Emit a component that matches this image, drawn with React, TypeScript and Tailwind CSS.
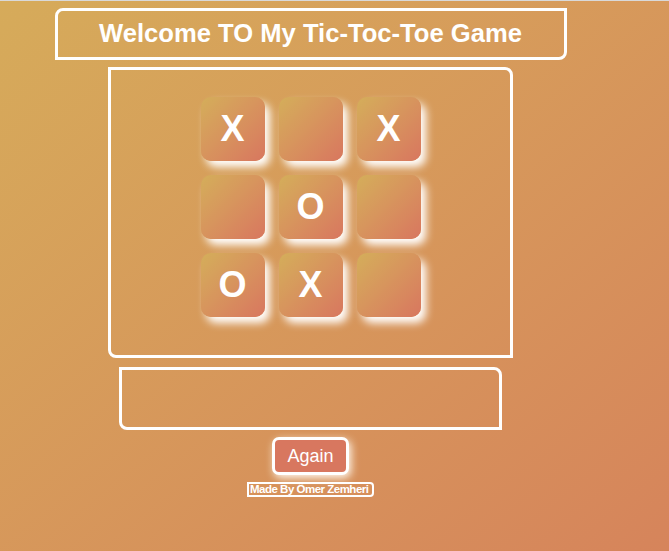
const cells = ["X", "", "X", "", "O", "", "O", "X", ""];

export default function App() {
  return (
    <div
      className="min-h-[551px] w-full bg-gradient-to-br from-[#d6ab5a] to-[#d6845b] border-t border-[#d9d9d9]"
      style={{ fontFamily: '"Liberation Sans", Arial, sans-serif' }}
    >
      <div className="w-[621px] flex flex-col items-center pt-[7px]">
        {/* タイトル */}
        <div className="w-[512px] h-[52px] border-[3px] border-white rounded-tl-[8px] rounded-br-[8px] flex items-center justify-center">
          <h1 className="text-white font-bold text-[25.6px] leading-none">
            Welcome TO My Tic-Toc-Toe Game
          </h1>
        </div>

        {/* 盤面 */}
        <div className="mt-[7px] w-[405px] h-[291px] border-[3px] border-white rounded-tr-[8px] rounded-bl-[8px] flex justify-center pt-[27px]">
          <div className="grid grid-cols-3 gap-[14px] h-fit">
            {cells.map((c, i) => (
              <div
                key={i}
                className="w-[64px] h-[64px] rounded-[10px] bg-gradient-to-br from-[#d4ae5a] to-[#d8765f] shadow-[5px_6px_9px_#ffffff] flex items-center justify-center text-white font-bold text-[36px] leading-none"
              >
                {c}
              </div>
            ))}
          </div>
        </div>

        {/* 結果 */}
        <div className="mt-[9px] w-[383px] h-[63px] border-[3px] border-white rounded-tr-[8px] rounded-bl-[8px]" />

        <button className="mt-[7px] w-[77px] h-[38px] bg-[#d8775f] border-[3px] border-white rounded-[7px] text-white text-[18px] shadow-[2px_3px_8px_#fff8ee]">
          Again
        </button>

        <div className="mt-[7px] w-[127px] h-[15px] border-2 border-white rounded-tr-[4px] rounded-br-[4px] flex items-center pl-[1px] pt-[1px] text-white font-bold text-[11.5px] leading-none tracking-[-0.5px] whitespace-nowrap">
          Made By Ömer Zemheri
        </div>
      </div>
    </div>
  );
}
